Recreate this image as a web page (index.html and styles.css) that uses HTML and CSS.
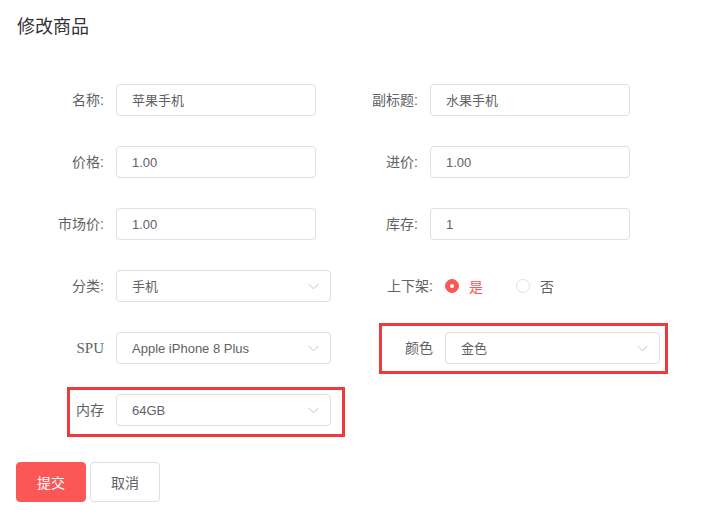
FILE: index.html
```html
<!DOCTYPE html>
<html lang="zh-CN">
<head>
<meta charset="utf-8">
<title>修改商品</title>
<link rel="stylesheet" href="styles.css">
</head>
<body>
<h1 class="title">修改商品</h1>
<div class="form">
  <div class="row">
    <div class="cell-left">
      <label class="label">名称:</label>
      <div class="input">苹果手机</div>
    </div>
    <div class="cell-right">
      <label class="label-r">副标题:</label>
      <div class="input">水果手机</div>
    </div>
  </div>
  <div class="row">
    <div class="cell-left">
      <label class="label">价格:</label>
      <div class="input">1.00</div>
    </div>
    <div class="cell-right">
      <label class="label-r">进价:</label>
      <div class="input">1.00</div>
    </div>
  </div>
  <div class="row">
    <div class="cell-left">
      <label class="label">市场价:</label>
      <div class="input">1.00</div>
    </div>
    <div class="cell-right">
      <label class="label-r">库存:</label>
      <div class="input">1</div>
    </div>
  </div>
  <div class="row">
    <div class="cell-left">
      <label class="label">分类:</label>
      <div class="select"><span>手机</span>
        <svg class="arrow" width="11" height="7" viewBox="0 0 11 7"><path d="M0.5 0.8 L5.5 5.8 L10.5 0.8" fill="none" stroke="#c0c4cc" stroke-width="1"/></svg>
      </div>
    </div>
    <div class="cell-right radio-cell">
      <label class="label-radio">上下架:</label>
      <div class="radio checked"><span class="dot"></span><span class="radio-text">是</span></div>
      <div class="radio"><span class="dot"></span><span class="radio-text">否</span></div>
    </div>
  </div>
  <div class="row">
    <div class="cell-left">
      <label class="label serif">SPU</label>
      <div class="select"><span>Apple iPhone 8 Plus</span>
        <svg class="arrow" width="11" height="7" viewBox="0 0 11 7"><path d="M0.5 0.8 L5.5 5.8 L10.5 0.8" fill="none" stroke="#c0c4cc" stroke-width="1"/></svg>
      </div>
    </div>
    <div class="cell-right">
      <div class="hl hl-color">
        <label class="label-hl">颜色</label>
        <div class="select"><span>金色</span>
          <svg class="arrow" width="11" height="7" viewBox="0 0 11 7"><path d="M0.5 0.8 L5.5 5.8 L10.5 0.8" fill="none" stroke="#c0c4cc" stroke-width="1"/></svg>
        </div>
      </div>
    </div>
  </div>
  <div class="row">
    <div class="cell-left">
      <div class="hl hl-mem">
        <label class="label-hl">内存</label>
        <div class="select"><span>64GB</span>
          <svg class="arrow" width="11" height="7" viewBox="0 0 11 7"><path d="M0.5 0.8 L5.5 5.8 L10.5 0.8" fill="none" stroke="#c0c4cc" stroke-width="1"/></svg>
        </div>
      </div>
    </div>
  </div>
  <div class="actions">
    <button class="btn btn-primary">提交</button>
    <button class="btn btn-default">取消</button>
  </div>
</div>
</body>
</html>
```
FILE: styles.css
```css
html, body {
  margin: 0;
  padding: 0;
  background: #fff;
}
body {
  font-family: "Liberation Sans", "Noto Sans CJK SC", sans-serif;
  color: #606266;
  font-size: 14px;
}
.title {
  margin: 0;
  padding: 15px 17px 0;
  font-size: 18px;
  line-height: 24px;
  height: 24px;
  font-weight: normal;
  color: #303133;
}
.form {
  margin-top: 45px;
  display: flex;
  flex-direction: column;
  gap: 30px;
}
.row {
  display: flex;
  height: 32px;
  align-items: center;
}
.cell-left {
  width: 364px;
  display: flex;
  align-items: center;
  flex: none;
}
.cell-right {
  display: flex;
  align-items: center;
}
.label {
  width: 104px;
  margin-right: 12px;
  text-align: right;
  line-height: 32px;
}
.label.serif {
  font-family: "Liberation Serif", serif;
  font-size: 15px;
}
.label-r {
  width: 54px;
  margin-right: 12px;
  text-align: right;
  line-height: 32px;
}
.input, .select {
  box-sizing: border-box;
  height: 32px;
  border: 1px solid #dcdfe6;
  border-radius: 4px;
  padding: 1px 15px 0;
  font-size: 13px;
  line-height: 29px;
  color: #606266;
  background: #fff;
}
.input {
  width: 200px;
}
.select {
  width: 215px;
  display: flex;
  align-items: center;
  justify-content: space-between;
  padding-right: 11px;
}
.arrow {
  display: block;
  flex: none;
}
.radio-cell {
  padding-left: 23px;
}
.label-radio {
  margin-right: 12px;
  line-height: 32px;
}
.radio {
  display: flex;
  align-items: center;
  margin-right: 33px;
}
.dot {
  box-sizing: border-box;
  width: 14px;
  height: 14px;
  border-radius: 50%;
  border: 1px solid #dcdfe6;
  background: #fff;
  margin-right: 10px;
  position: relative;
}
.radio.checked .dot {
  border-color: #fb5757;
  background: #fb5757;
}
.radio.checked .dot::after {
  content: "";
  position: absolute;
  width: 4px;
  height: 4px;
  border-radius: 50%;
  background: #fff;
  left: 4px;
  top: 4px;
}
.radio.checked .radio-text {
  color: #fb5757;
}
.hl {
  display: flex;
  align-items: center;
  border: 3px solid #ee3a3a;
}
.hl-color {
  margin: -9px 0 -10px 15px;
  padding: 6px 5px 7px 23px;
}
.hl-mem {
  margin: -7px 0 -11px 67px;
  padding: 4px 11px 8px 6px;
}
.label-hl {
  margin-right: 12px;
  line-height: 32px;
}
.actions {
  display: flex;
  gap: 4px;
  margin-top: 6px;
  padding-left: 16px;
}
.btn {
  box-sizing: border-box;
  width: 70px;
  height: 40px;
  border-radius: 4px;
  font-family: "Liberation Sans", "Noto Sans CJK SC", sans-serif;
  font-size: 14px;
  cursor: pointer;
  padding: 0;
}
.btn-primary {
  background: #fb5757;
  border: 1px solid #fb5757;
  color: #fff;
}
.btn-default {
  background: #fff;
  border: 1px solid #dcdfe6;
  color: #606266;
}
```
